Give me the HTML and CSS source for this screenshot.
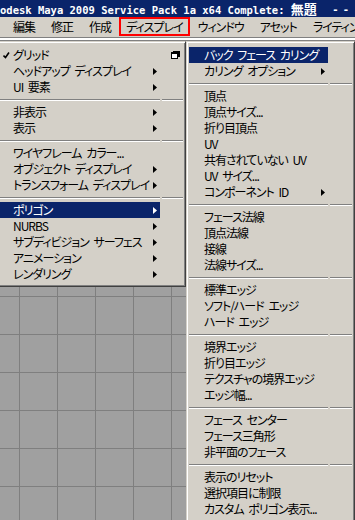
FILE: index.html
```html
<!DOCTYPE html>
<html lang="ja">
<head>
  <meta charset="UTF-8" />
  <title>Maya 2009 - ディスプレイ</title>
  <link rel="stylesheet" href="styles.css">
</head>
<body>
  <div class="titlebar">
    <span class="title">odesk Maya 2009 Service Pack 1a x64 Complete: <span class="title-doc">無題</span></span>
    <span class="title-end">--</span>
  </div>

  <nav class="menubar">
    <span class="menubar-item">編集</span>
    <span class="menubar-item">修正</span>
    <span class="menubar-item">作成</span>
    <span class="menubar-item is-marked">ディスプレイ</span>
    <span class="menubar-item">ウィンドウ</span>
    <span class="menubar-item">アセット</span>
    <span class="menubar-item">ライティング/</span>
  </nav>

  <div class="shelf"></div>

  <div class="workspace">
    <div class="left-col">
      <ul class="menu menu-left">
        <li class="item">
          <span class="label"><svg class="check" width="7" height="7" viewBox="0 0 7 7"><path d="M0.5 3.5 L2.5 5.5 L6 0.5" fill="none" stroke="#000" stroke-width="1.6"/></svg>グリッド</span>
          <span class="opt"><svg width="9" height="8" viewBox="0 0 9 8"><rect x="2" y="0" width="7" height="6" fill="#000"/><rect x="0.5" y="1.5" width="6" height="6" fill="#fff" stroke="#000"/><rect x="0" y="1" width="7" height="2" fill="#000"/></svg></span>
        </li>
        <li class="item"><span class="label">ヘッドアップ ディスプレイ<svg class="arrow" width="4" height="7" viewBox="0 0 4 7"><path d="M0 0 L4 3.5 L0 7Z"/></svg></span><span class="opt"></span></li>
        <li class="item"><span class="label">UI 要素<svg class="arrow" width="4" height="7" viewBox="0 0 4 7"><path d="M0 0 L4 3.5 L0 7Z"/></svg></span><span class="opt"></span></li>
        <li class="sep"><i></i><i></i></li>
        <li class="item"><span class="label">非表示<svg class="arrow" width="4" height="7" viewBox="0 0 4 7"><path d="M0 0 L4 3.5 L0 7Z"/></svg></span><span class="opt"></span></li>
        <li class="item"><span class="label">表示<svg class="arrow" width="4" height="7" viewBox="0 0 4 7"><path d="M0 0 L4 3.5 L0 7Z"/></svg></span><span class="opt"></span></li>
        <li class="sep"><i></i><i></i></li>
        <li class="item"><span class="label">ワイヤフレーム カラー...</span><span class="opt"></span></li>
        <li class="item"><span class="label">オブジェクト ディスプレイ<svg class="arrow" width="4" height="7" viewBox="0 0 4 7"><path d="M0 0 L4 3.5 L0 7Z"/></svg></span><span class="opt"></span></li>
        <li class="item"><span class="label">トランスフォーム ディスプレイ<svg class="arrow" width="4" height="7" viewBox="0 0 4 7"><path d="M0 0 L4 3.5 L0 7Z"/></svg></span><span class="opt"></span></li>
        <li class="sep"><i></i><i></i></li>
        <li class="item is-active"><span class="label">ポリゴン<svg class="arrow" width="4" height="7" viewBox="0 0 4 7"><path d="M0 0 L4 3.5 L0 7Z"/></svg></span><span class="opt"></span></li>
        <li class="item"><span class="label">NURBS<svg class="arrow" width="4" height="7" viewBox="0 0 4 7"><path d="M0 0 L4 3.5 L0 7Z"/></svg></span><span class="opt"></span></li>
        <li class="item"><span class="label">サブディビジョン サーフェス<svg class="arrow" width="4" height="7" viewBox="0 0 4 7"><path d="M0 0 L4 3.5 L0 7Z"/></svg></span><span class="opt"></span></li>
        <li class="item"><span class="label">アニメーション<svg class="arrow" width="4" height="7" viewBox="0 0 4 7"><path d="M0 0 L4 3.5 L0 7Z"/></svg></span><span class="opt"></span></li>
        <li class="item"><span class="label">レンダリング<svg class="arrow" width="4" height="7" viewBox="0 0 4 7"><path d="M0 0 L4 3.5 L0 7Z"/></svg></span><span class="opt"></span></li>
      </ul>
      <div class="viewport"></div>
    </div>

    <ul class="menu menu-right">
      <li class="item is-active"><span class="label">バック フェース カリング</span><span class="opt"></span></li>
      <li class="item"><span class="label">カリング オプション<svg class="arrow" width="4" height="7" viewBox="0 0 4 7"><path d="M0 0 L4 3.5 L0 7Z"/></svg></span><span class="opt"></span></li>
      <li class="sep"><i></i><i></i></li>
      <li class="item"><span class="label">頂点</span><span class="opt"></span></li>
      <li class="item"><span class="label">頂点サイズ...</span><span class="opt"></span></li>
      <li class="item"><span class="label">折り目頂点</span><span class="opt"></span></li>
      <li class="item"><span class="label">UV</span><span class="opt"></span></li>
      <li class="item"><span class="label">共有されていない UV</span><span class="opt"></span></li>
      <li class="item"><span class="label">UV サイズ...</span><span class="opt"></span></li>
      <li class="item"><span class="label">コンポーネント ID<svg class="arrow" width="4" height="7" viewBox="0 0 4 7"><path d="M0 0 L4 3.5 L0 7Z"/></svg></span><span class="opt"></span></li>
      <li class="sep"><i></i><i></i></li>
      <li class="item"><span class="label">フェース法線</span><span class="opt"></span></li>
      <li class="item"><span class="label">頂点法線</span><span class="opt"></span></li>
      <li class="item"><span class="label">接線</span><span class="opt"></span></li>
      <li class="item"><span class="label">法線サイズ...</span><span class="opt"></span></li>
      <li class="sep"><i></i><i></i></li>
      <li class="item"><span class="label">標準エッジ</span><span class="opt"></span></li>
      <li class="item"><span class="label">ソフト/ハード エッジ</span><span class="opt"></span></li>
      <li class="item"><span class="label">ハード エッジ</span><span class="opt"></span></li>
      <li class="sep"><i></i><i></i></li>
      <li class="item"><span class="label">境界エッジ</span><span class="opt"></span></li>
      <li class="item"><span class="label">折り目エッジ</span><span class="opt"></span></li>
      <li class="item"><span class="label">テクスチャの境界エッジ</span><span class="opt"></span></li>
      <li class="item"><span class="label">エッジ幅...</span><span class="opt"></span></li>
      <li class="sep"><i></i><i></i></li>
      <li class="item"><span class="label">フェース センター</span><span class="opt"></span></li>
      <li class="item"><span class="label">フェース三角形</span><span class="opt"></span></li>
      <li class="item"><span class="label">非平面のフェース</span><span class="opt"></span></li>
      <li class="sep"><i></i><i></i></li>
      <li class="item"><span class="label">表示のリセット</span><span class="opt"></span></li>
      <li class="item"><span class="label">選択項目に制限</span><span class="opt"></span></li>
      <li class="item"><span class="label">カスタム ポリゴン表示...</span><span class="opt"></span></li>
    </ul>
  </div>
</body>
</html>
```

FILE: styles.css
```css
:root {
  --face: #d4d0c8;
  --shadow: #808080;
  --dark: #404040;
  --select: #0a246a;
  --grid: #7f7f7f;
  --view: #a0a0a0;
}

body {
  margin: 0;
  width: 355px;
  height: 520px;
  overflow: hidden;
  background: var(--face);
  font-family: "Noto Sans CJK JP", sans-serif;
  font-size: 12px;
  color: #000;
}

.titlebar {
  height: 17px;
  background: var(--select);
  color: white;
  display: flex;
  align-items: center;
  white-space: nowrap;
  overflow: hidden;
  font: bold 10.5px "DejaVu Sans Mono", "Noto Sans CJK JP", monospace;
}

.title-doc {
  font-size: 13px;
}

.title-end {
  margin-left: auto;
  padding-right: 2px;
  letter-spacing: 4px;
}

.menubar {
  height: 20px;
  display: flex;
  padding-left: 5px;
  overflow: hidden;
  font-feature-settings: "palt";
  letter-spacing: -1px;
  white-space: nowrap;
}

.menubar-item {
  height: 19px;
  line-height: 19px;
  padding: 0 8px;
  box-sizing: border-box;
}

.menubar-item.is-marked {
  padding: 0 5px;
  border: 2px solid #ff0000;
  line-height: 15px;
}

.shelf {
  height: 2px;
  border-top: 1px solid var(--shadow);
  border-bottom: 1px solid var(--shadow);
  background: white;
}

.workspace {
  display: grid;
  grid-template-columns: 186px 1fr;
  height: 479px;
}

.left-col {
  display: flex;
  flex-direction: column;
  min-width: 0;
}

.viewport {
  flex: 1;
  background-color: var(--view);
  background-image:
    linear-gradient(to right, var(--grid) 1px, transparent 1px),
    linear-gradient(to bottom, var(--grid) 1px, transparent 1px);
  background-size: 38px 38px;
  background-position: 19px 9px;
}

/* popup menus */
.menu {
  list-style: none;
  margin: 0;
  padding: 5px 2px 4px;
  background: var(--face);
  border: 1px solid;
  border-color: var(--face) var(--dark) var(--dark) var(--face);
  box-shadow: inset 1px 1px #fff, inset -1px -1px var(--shadow);
  font-feature-settings: "palt";
  letter-spacing: -1px;
  word-spacing: 3px;
  white-space: nowrap;
}

.menu-left {
  margin-left: -5px;
}

.menu-right {
  align-self: start;
}

.item,
.sep {
  display: grid;
  grid-template-columns: 1fr 21px;
  column-gap: 2px;
}

.menu-right .item,
.menu-right .sep {
  grid-template-columns: 1fr 22px;
}

.item {
  height: 16px;
  line-height: 16px;
}

.label {
  display: flex;
  align-items: center;
  padding: 0 3px 0 15px;
}

.item.is-active .label {
  background: var(--select);
  color: white;
}

.check {
  margin-left: -10px;
  margin-right: 3px;
}

.arrow {
  margin-left: auto;
  fill: currentColor;
}

.opt {
  display: flex;
  align-items: center;
  justify-content: flex-end;
  padding-right: 3px;
}

.sep {
  height: 9px;
  align-items: start;
}

.sep i {
  margin-top: 4px;
  border-top: 1px solid var(--shadow);
  border-bottom: 1px solid #fff;
}
```
